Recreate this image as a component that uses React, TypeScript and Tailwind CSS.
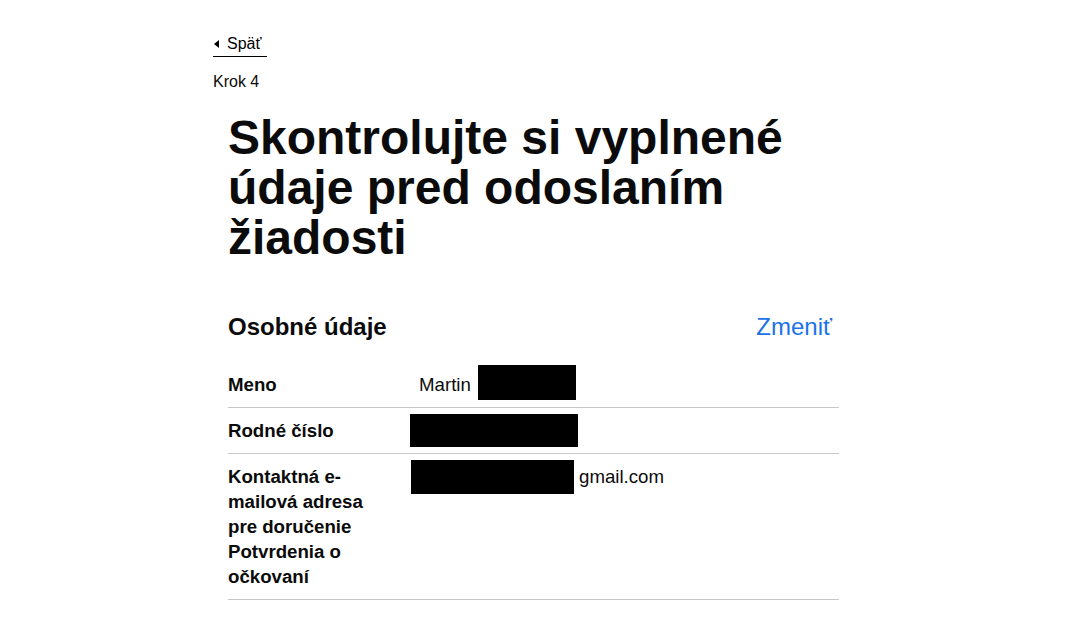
import { ReactNode } from 'react';

function Redacted({ w, h, className = '' }: { w: string; h: string; className?: string }) {
  return <span className={`inline-block bg-black ${w} ${h} ${className}`} />;
}

function Row({ label, children }: { label: ReactNode; children: ReactNode }) {
  return (
    <div className="grid grid-cols-[182px_1fr] border-b border-[#c8c8c8] py-[10px]">
      <div className="pr-[30px] font-bold text-[18.67px] leading-[25px]">{label}</div>
      <div className="flex items-start text-[18.67px] leading-[25px]">{children}</div>
    </div>
  );
}

export default function App() {
  return (
    <div
      className="min-h-screen bg-white text-[#0b0b0b]"
      style={{ fontFamily: '"Liberation Sans", Arial, sans-serif' }}
    >
      <div className="ml-[213px] w-[626px] pt-[35px]">
        <a className="flex w-fit items-center border-b border-black pb-[3px] pl-px pr-[6px] text-[16px] leading-[18px] text-black">
          <span className="mr-[8px] inline-block h-0 w-0 border-y-[4px] border-r-[5px] border-y-transparent border-r-black" />
          Späť
        </a>
        <p className="mt-[16px] text-[16px] leading-[18px]">Krok 4</p>

        <div className="ml-[15px]">
          <h1 className="mt-[22px] w-[600px] text-[48px] font-bold leading-[50px]">
            Skontrolujte si vyplnené údaje pred odoslaním žiadosti
          </h1>

          <div className="mt-[49px] flex items-center justify-between pr-[7px]">
            <h2 className="text-[24px] font-bold leading-[30px]">Osobné údaje</h2>
            <a className="text-[24px] leading-[30px] text-[#1a73e8]">Zmeniť</a>
          </div>

          <div className="mt-[20px]">
            <Row label="Meno">
              <span className="ml-[9px]">Martin</span>
              <Redacted w="w-[98px]" h="h-[35px]" className="-mb-[10px] ml-[7px] -mt-[7px]" />
            </Row>
            <Row label="Rodné číslo">
              <Redacted w="w-[168px]" h="h-[33px]" className="-mb-[8px] -mt-[4px]" />
            </Row>
            <Row label="Kontaktná e-mailová adresa pre doručenie Potvrdenia o očkovaní">
              <Redacted w="w-[163px]" h="h-[34px]" className="-mb-[9px] ml-px -mt-[4px]" />
              <span className="ml-[5px]">gmail.com</span>
            </Row>
          </div>
        </div>
      </div>
    </div>
  );
}
